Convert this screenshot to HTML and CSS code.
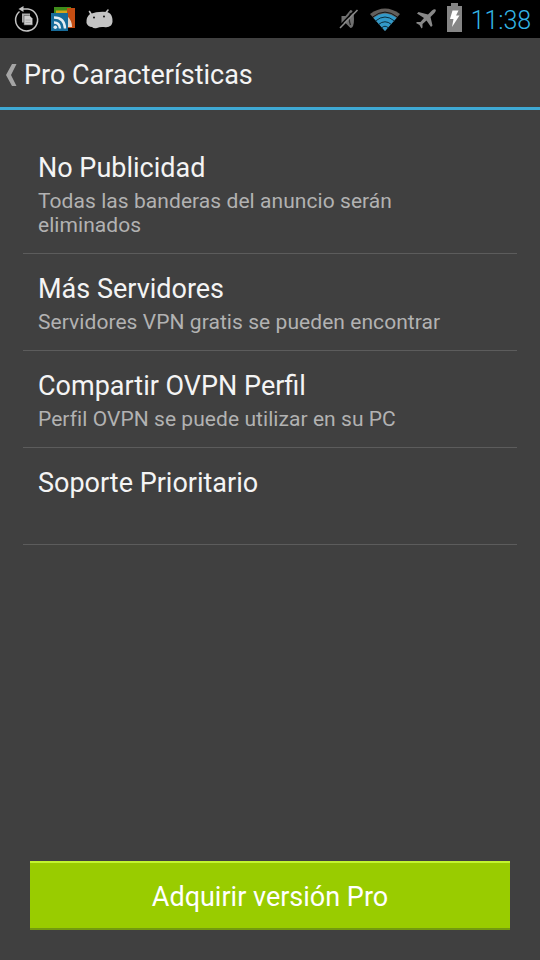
FILE: index.html
```html
<!DOCTYPE html>
<html lang="es">
<head>
    <meta charset="UTF-8">
    <meta name="viewport" content="width=device-width, initial-scale=1.0">
    <title>Pro Características</title>
    <link rel="stylesheet" href="styles.css">
</head>
<body>
    <div class="status-bar">
        <div class="notifications">
            <!-- backup -->
            <svg width="26" height="28" viewBox="0 0 26 28">
                <path d="M5.500 6.500A11 11 0 1 0 14 4H6" fill="none" stroke="#c4c4c4" stroke-width="1.500"/>
                <path d="M9.500 1v6L4.500 4z" fill="#c4c4c4"/>
                <path d="M8 8.500h8v9H8z" fill="#aaa"/>
                <path d="M10 10.500h5.500l3 3v6.500H10z" fill="#ccc" stroke="#555" stroke-width=".6"/>
                <path d="M11.500 15h5M11.500 17.500h5" stroke="#999" stroke-width=".7"/>
            </svg>
            <!-- news feed -->
            <svg width="26" height="26" viewBox="0 0 26 26">
                <path d="M4 1h17v7H4z" fill="#408c1b"/>
                <path d="M6 4.500h14v4H6z" fill="#d4a51a"/>
                <path d="M17 2h8v20h-8z" fill="#c44d12"/>
                <path d="M17 10q5 4 5 11h-5z" fill="#e5d3c8"/>
                <path d="M1 7h17v18H1z" fill="#176b99"/>
                <path d="M4 11.500q10.500 0 11 11M4 16.500q5.500 0 6 6" fill="none" stroke="#e4edf2" stroke-width="2.400"/>
                <circle cx="5.300" cy="21.200" r="1.800" fill="#e4edf2"/>
            </svg>
            <!-- android head -->
            <svg width="28" height="22" viewBox="0 0 28 22">
                <path d="M5 6L3.500 3.500M20 4.500l2-2.500" stroke="#c4c4c4" stroke-width="1.600" stroke-linecap="round"/>
                <path d="M4 6Q12 3 21 4Q25 5 26 9Q27.500 14 25 17.500Q22 20 18 19Q14 18.500 11 20Q8 21 6 19Q2 19 .500 15Q0 9 4 6z" fill="#c4c4c4"/>
                <circle cx="8" cy="9.500" r="1" fill="#111"/>
                <circle cx="18" cy="8.500" r="1" fill="#111"/>
            </svg>
        </div>
        <div class="system">
            <!-- muted -->
            <svg class="mute" width="20" height="22" viewBox="0 0 20 22">
                <path d="M2.500 8h4l5-6q3.500 0 3.500 9t-3.500 9l-5-5h-4z" fill="#707070"/>
                <path d="M11.500 5q-2.500 6 0 12" fill="none" stroke="#222" stroke-width="1.300"/>
                <path d="M0 18.500L17 1" stroke="#000" stroke-width="1.500"/>
                <path d="M1 20L18.500 2" stroke="#888" stroke-width="1.600"/>
            </svg>
            <!-- wifi -->
            <svg class="wifi" width="30" height="23" viewBox="0 0 30 23">
                <path d="M0 6Q15-5 30 6L15 23z" fill="#625e5b"/>
                <path d="M3.500 10Q15 1 26.500 10L15 23z" fill="#3299c8"/>
                <path d="M2.500 9.200Q15-1 27.500 9.200" fill="none" stroke="#000" stroke-width=".8"/>
                <path d="M5.500 13Q15 5 24.500 13M8.500 16.500Q15 11 21.500 16.500M11.500 20Q15 16.500 18.500 20" fill="none" stroke="#06202c" stroke-width=".9"/>
            </svg>
            <!-- airplane mode -->
            <svg class="plane" width="22" height="22" viewBox="0 0 22 22">
                <path d="M20.500 1.500Q21.500 2.500 19.500 5L15.500 9 17.500 17.500 16 19 11.500 12.500 7.500 16V19.500L6.500 20.500 4.500 17 1 15 2 14H5.500L9 10 2 5.500 3.500 4 13 6.500 17 2.500Q19.500.500 20.500 1.500z" fill="#888"/>
            </svg>
            <!-- charging battery -->
            <svg class="battery" width="15" height="29" viewBox="0 0 15 29">
                <path d="M0 3h4V0h7v3h4v26H0z" fill="#858585"/>
                <path d="M5.500 7.500h6l-2.500 5h3.500L5 24l1.500-8H3z" fill="#fff"/>
            </svg>
            <span class="clock">11:38</span>
        </div>
    </div>

    <div class="action-bar">
        <svg width="11" height="22" viewBox="0 0 11 22">
            <path d="M6 0h4.500L5 11l5.500 11H6L0 11z" fill="#a5a5a5"/>
        </svg>
        <h1>Pro Características</h1>
    </div>

    <ul class="feature-list">
        <li class="feature">
            <div class="feature-name">No Publicidad</div>
            <div class="feature-text">Todas las banderas del anuncio serán eliminados</div>
        </li>
        <li class="feature">
            <div class="feature-name">Más Servidores</div>
            <div class="feature-text">Servidores VPN gratis se pueden encontrar</div>
        </li>
        <li class="feature">
            <div class="feature-name">Compartir OVPN Perfil</div>
            <div class="feature-text">Perfil OVPN se puede utilizar en su PC</div>
        </li>
        <li class="feature">
            <div class="feature-name">Soporte Prioritario</div>
            <div class="feature-text"></div>
        </li>
    </ul>

    <button class="buy-button">Adquirir versión Pro</button>
</body>
</html>
```

FILE: styles.css
```css
* {
    box-sizing: border-box;
}
body {
    display: flex;
    flex-direction: column;
    height: 960px;
    margin: 0;
    background: #404040;
    color: #f4f4f4;
    font-family: Roboto, sans-serif;
}
svg {
    display: block;
    flex: none;
}
.status-bar {
    display: flex;
    justify-content: space-between;
    height: 38px;
    padding: 0 9px 0 14px;
    background: #000;
}
.notifications {
    display: flex;
    align-items: center;
    gap: 10px;
}
.system {
    display: flex;
    align-items: center;
}
.mute {
    margin-right: 11px;
}
.wifi {
    margin-right: 15px;
}
.plane {
    margin-right: 10px;
}
.battery {
    margin: -4px 9px 0 0;
}
.clock {
    padding-top: 2px;
    color: #33b5e5;
    font-size: 25px;
    font-weight: 300;
    letter-spacing: -0.1px;
}
.action-bar {
    display: flex;
    align-items: center;
    gap: 7px;
    height: 72px;
    padding: 4px 0 0 6px;
    border-bottom: 3px solid #3fa9d4;
}
.action-bar h1 {
    margin: 0;
    font-size: 27px;
    font-weight: normal;
}
.feature-list {
    flex: 1;
    margin: 23px 23px 0;
    padding: 0;
    list-style: none;
}
.feature {
    padding: 19px 30px 16px 15px;
    border-bottom: 1px solid #5c5c5c;
}
.feature-name {
    margin-bottom: 5px;
    font-size: 27px;
    line-height: 32px;
}
.feature-text {
    min-height: 24px;
    color: #b2b2b2;
    font-size: 21px;
    line-height: 24px;
    letter-spacing: 0.06px;
}
.buy-button {
    height: 69px;
    margin: 0 30px 30px;
    padding: 2px 0 0;
    border: 0;
    border-top: 2px solid #c3f52e;
    border-bottom: 2px solid #739a10;
    background: #9c0;
    color: #fff;
    font-family: inherit;
    font-size: 27px;
}
```
